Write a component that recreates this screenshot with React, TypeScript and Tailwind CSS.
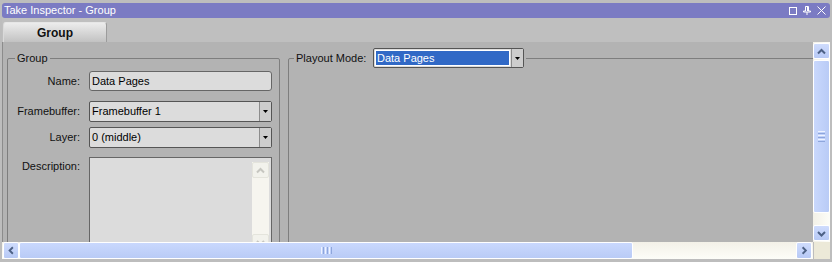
import React from "react"

const font = "font-['Liberation_Sans',Arial,sans-serif]"

function Chevron({ dir, className = "" }: { dir: "up" | "down" | "left" | "right"; className?: string }) {
  const d = {
    up: "M4 9.5 L7.5 6 L11 9.5",
    down: "M4 6 L7.5 9.5 L11 6",
    left: "M9.5 4 L6 7.5 L9.5 11",
    right: "M6 4 L9.5 7.5 L6 11",
  }[dir]
  return (
    <svg width="15" height="15" viewBox="0 0 15 15" className={className}>
      <path d={d} fill="none" stroke="currentColor" strokeWidth="2" />
    </svg>
  )
}

function ScrollButton({ dir, className = "" }: { dir: "up" | "down" | "left" | "right"; className?: string }) {
  return (
    <div
      className={`flex items-center justify-center rounded-[2px] border border-white bg-gradient-to-b from-[#cfdcfd] to-[#b7c9f5] text-[#4d6185] ${className}`}
    >
      <Chevron dir={dir} />
    </div>
  )
}

function DropArrow() {
  return (
    <div className="flex w-[12px] items-center justify-center border-l border-[#8c8c8c] bg-[#cdcdcd]">
      <svg width="5" height="3" viewBox="0 0 5 3">
        <path d="M0 0 H5 L2.5 3 Z" fill="#000" />
      </svg>
    </div>
  )
}

function Select({ value, h = "h-[21px]" }: { value: string; h?: string }) {
  return (
    <div className={`flex w-[183px] ${h} rounded-[2px] border border-[#555] bg-[#dcdcdc]`}>
      <div className="flex flex-1 items-center pl-[2px] text-black">{value}</div>
      <DropArrow />
    </div>
  )
}

function Row({ label, children }: { label: string; children: React.ReactNode }) {
  return (
    <div className="flex items-center">
      <div className="w-[72px] text-right text-[#111]">{label}</div>
      <div className="ml-[9px]">{children}</div>
    </div>
  )
}

export default function App() {
  return (
    <div className={`flex h-[262px] w-[832px] flex-col bg-[#bdbdbd] px-[2px] pt-[3px] text-[11px] ${font}`}>
      {/* title bar */}
      <div className="flex h-[15px] items-center rounded-[3px] bg-[#7b7bc3] pl-[2px] pr-[4px] text-white">
        <span className="leading-none">Take Inspector - Group</span>
        <div className="ml-auto flex items-center gap-[6px]">
          <svg width="8" height="8" viewBox="0 0 8 8">
            <rect x="0.5" y="0.5" width="7" height="7" fill="none" stroke="#fff" />
          </svg>
          <svg width="8" height="9" viewBox="0 0 8 9">
            <path d="M2.5 0.5 H5.5 V5 H7.5 V6 H0.5 V5 H2.5 Z M4 6 V9" fill="none" stroke="#fff" />
            <path d="M4.5 1 V5" stroke="#fff" />
          </svg>
          <svg width="9" height="9" viewBox="0 0 9 9">
            <path d="M0.5 0.5 L8.5 8.5 M8.5 0.5 L0.5 8.5" stroke="#fff" />
          </svg>
        </div>
      </div>

      {/* tab strip */}
      <div className="flex h-[24px] items-end bg-[#bfbfbf] pl-[1px] pt-[4px]">
        <div className="flex h-[20px] w-[104px] items-center justify-center rounded-t-[3px] border-t border-l border-r border-t-[#e6e6e6] border-l-[#dadada] border-r-[#9c9c9c] bg-gradient-to-b from-[#ececec] to-[#c2c2c2] text-[12px] font-bold text-[#111]">
          Group
        </div>
      </div>

      {/* main */}
      <div className="flex h-[200px]">
        <div className="flex w-[811px] items-start overflow-hidden border-l border-[#8c8c8c] bg-[#b3b3b3] pl-[4px]">
          <fieldset className="mt-[10px] h-[220px] w-[273px] shrink-0 rounded-[2px] border border-[#7e7e7e] pr-[6px]">
            <legend className="ml-[7px] px-[2px] leading-[13px] text-[#111]">Group</legend>
            <div className="mt-[6px] flex flex-col">
              <Row label="Name:">
                <div className="flex h-[20px] w-[183px] items-center rounded-[3px] border border-[#666] bg-[#dcdcdc] pl-[2px] text-black">
                  Data Pages
                </div>
              </Row>
              <div className="mt-[10px]">
                <Row label="Framebuffer:">
                  <Select value="Framebuffer 1" />
                </Row>
              </div>
              <div className="mt-[5px]">
                <Row label="Layer:">
                  <Select value="0 (middle)" />
                </Row>
              </div>
              <div className="mt-[9px] flex items-start">
                <div className="w-[72px] pt-[1px] text-right text-[#111]">Description:</div>
                <div className="ml-[9px] flex h-[110px] w-[183px] justify-end border border-[#666] bg-[#dcdcdc] py-[4px] pr-[2px]">
                  <div className="flex w-[17px] flex-col justify-between bg-[#f6f5ef]">
                    <div className="flex h-[16px] items-center justify-center rounded-[2px] border border-[#e4e4dc] bg-[#f2f2ec] text-[#c6c6c0]">
                      <Chevron dir="up" />
                    </div>
                    <div className="mb-[12px] flex h-[16px] items-center justify-center rounded-[2px] border border-[#e4e4dc] bg-[#f2f2ec] text-[#c6c6c0]">
                      <Chevron dir="down" />
                    </div>
                  </div>
                </div>
              </div>
            </div>
          </fieldset>

          <fieldset className="ml-[8px] mt-[6px] h-[220px] w-[540px] shrink-0 rounded-[2px] border border-[#7e7e7e]">
            <legend className="ml-[5px] px-[2px]">
              <div className="flex items-center">
                <span className="w-[77px] text-[#111]">Playout Mode:</span>
                <div className="flex h-[20px] w-[151px] rounded-[2px] border border-[#555] bg-[#dcdcdc]">
                  <div className="m-[1px] flex flex-1 items-center border border-white bg-[#3169c6] pl-[1px] text-white">
                    Data Pages
                  </div>
                  <DropArrow />
                </div>
              </div>
            </legend>
          </fieldset>
        </div>

        {/* vertical scrollbar */}
        <div className="flex w-[17px] flex-col bg-gradient-to-r from-[#f3f1e8] to-[#fdfdf8] py-[1px]">
          <ScrollButton dir="up" className="h-[16px]" />
          <div className="mt-[1px] flex h-[153px] items-center justify-center rounded-[2px] border border-white bg-gradient-to-r from-[#c9d8fd] to-[#b9cbf6]">
            <div className="flex flex-col gap-[1px]">
              <div className="h-[1px] w-[7px] bg-[#eef3ff]" />
              <div className="h-[1px] w-[7px] bg-[#8ea6dc]" />
              <div className="h-[1px] w-[7px] bg-[#eef3ff]" />
              <div className="h-[1px] w-[7px] bg-[#8ea6dc]" />
              <div className="h-[1px] w-[7px] bg-[#eef3ff]" />
              <div className="h-[1px] w-[7px] bg-[#8ea6dc]" />
            </div>
          </div>
          <ScrollButton dir="down" className="mt-auto h-[16px]" />
        </div>
      </div>

      {/* horizontal scrollbar */}
      <div className="flex h-[17px]">
        <div className="flex w-[811px] bg-gradient-to-b from-[#f3f1e8] to-[#fdfdf8] px-[1px]">
          <ScrollButton dir="left" className="w-[16px]" />
          <div className="flex w-[614px] items-center justify-center rounded-[2px] border border-white bg-gradient-to-b from-[#c9d8fd] to-[#b9cbf6]">
            <div className="flex gap-[1px]">
              <div className="h-[7px] w-[1px] bg-[#eef3ff]" />
              <div className="h-[7px] w-[1px] bg-[#8ea6dc]" />
              <div className="h-[7px] w-[1px] bg-[#eef3ff]" />
              <div className="h-[7px] w-[1px] bg-[#8ea6dc]" />
              <div className="h-[7px] w-[1px] bg-[#eef3ff]" />
              <div className="h-[7px] w-[1px] bg-[#8ea6dc]" />
            </div>
          </div>
          <ScrollButton dir="right" className="ml-auto w-[16px]" />
        </div>
        <div className="ml-[1px] w-[16px] bg-[#ece9d8]" />
      </div>
    </div>
  )
}
